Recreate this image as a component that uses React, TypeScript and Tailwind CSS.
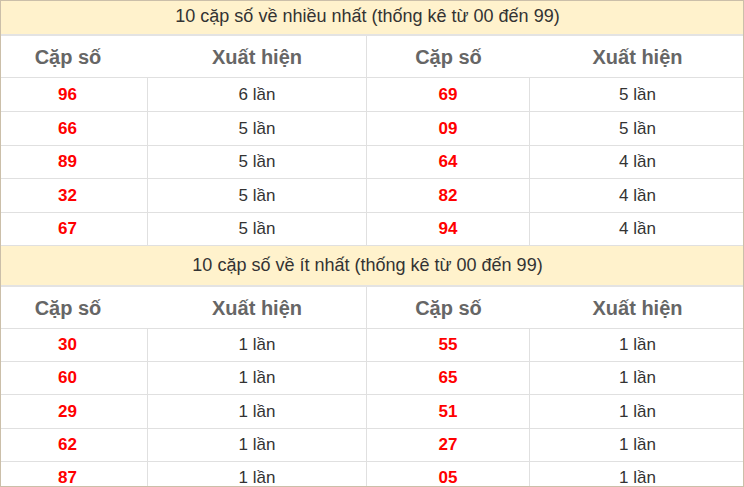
const most = [
  ["96", "6", "69", "5"],
  ["66", "5", "09", "5"],
  ["89", "5", "64", "4"],
  ["32", "5", "82", "4"],
  ["67", "5", "94", "4"],
];

const least = [
  ["30", "1", "55", "1"],
  ["60", "1", "65", "1"],
  ["29", "1", "51", "1"],
  ["62", "1", "27", "1"],
  ["87", "1", "05", "1"],
];

const cols = "grid grid-cols-[147px_219px_163px_1fr]";

function Title({ text, tall }: { text: string; tall?: boolean }) {
  return (
    <div
      className={`flex items-center justify-center pr-[9px] bg-[#fff2cc] border-b-2 border-[#e3e3e3] text-[18px] text-[#333] ${
        tall ? "h-[41px]" : "h-[35px] pb-[3px]"
      }`}
    >
      {text}
    </div>
  );
}

function Head() {
  return (
    <div className="grid grid-cols-[366px_1fr] h-[41px] text-[20px] font-bold text-[#666]">
      <div className="grid grid-cols-[147px_1fr] items-center border-r border-[#e0e0e0]">
        <span className="text-center pr-[13px]">Cặp số</span>
        <span className="text-center">Xuất hiện</span>
      </div>
      <div className="grid grid-cols-[163px_1fr] items-center">
        <span className="text-center">Cặp số</span>
        <span className="text-center pl-[2px]">Xuất hiện</span>
      </div>
    </div>
  );
}

function Rows({ data, heights }: { data: string[][]; heights: string[] }) {
  return (
    <>
      {data.map((r, i) => (
        <div
          key={i}
          className={`${cols} ${heights[i]} border-t border-[#e0e0e0] text-[17px]`}
        >
          <div className="flex items-center justify-center pr-[13px] font-bold text-[#ff0000] border-r border-[#e0e0e0]">
            {r[0]}
          </div>
          <div className="flex items-center justify-center text-[#333] border-r border-[#e0e0e0]">
            {r[1]} lần
          </div>
          <div className="flex items-center justify-center font-bold text-[#ff0000] border-r border-[#e0e0e0]">
            {r[2]}
          </div>
          <div className="flex items-center justify-center pl-[2px] text-[#333]">{r[3]} lần</div>
        </div>
      ))}
    </>
  );
}

export default function App() {
  return (
    <div className="w-[744px] h-[487px] overflow-hidden bg-white font-['Liberation_Sans',Arial,sans-serif]">
      <div className="border border-[#cbbfa9] h-[487px] overflow-hidden">
        <Title text="10 cặp số về nhiều nhất (thống kê từ 00 đến 99)" />
        <Head />
        <Rows data={most} heights={["h-[34px]", "h-[34px]", "h-[33px]", "h-[34px]", "h-[33px]"]} />
        <div className="border-t border-[#e0e0e0]">
          <Title text="10 cặp số về ít nhất (thống kê từ 00 đến 99)" tall />
        </div>
        <Head />
        <Rows data={least} heights={["h-[33px]", "h-[33px]", "h-[34px]", "h-[33px]", "h-[33px]"]} />
      </div>
    </div>
  );
}
